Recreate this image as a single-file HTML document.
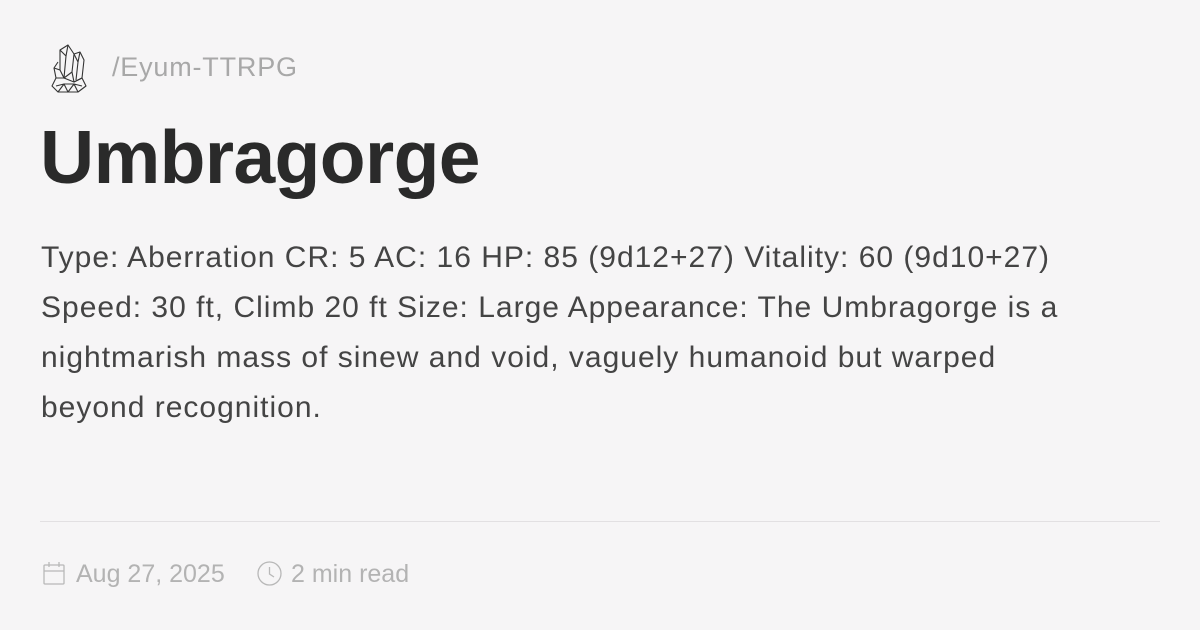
<!DOCTYPE html>
<html><head><meta charset="utf-8"><style>
html,body{margin:0;padding:0}
body{width:1200px;height:630px;background:#f6f5f6;font-family:"Liberation Sans",sans-serif;position:relative;overflow:hidden}
.brand{position:absolute;left:112px;top:52px;font-size:27px;color:#a8a8a8;letter-spacing:0.8px}
h1{position:absolute;left:40px;top:120px;margin:0;font-size:75px;font-weight:bold;color:#2a2a2a;letter-spacing:-0.6px;line-height:1}
.desc{position:absolute;left:41px;top:233px;font-size:30px;line-height:50px;color:#444;white-space:nowrap;letter-spacing:1px}
.hr{position:absolute;left:40px;right:40px;top:521px;height:1px;background:#e2e0e2}
.meta{position:absolute;top:560px;font-size:25px;color:#b3b3b3}
</style></head><body>
<svg style="position:absolute;left:48px;top:42px" width="40" height="52" viewBox="0 0 40 52" fill="none" stroke="#333" stroke-width="1.1" stroke-linejoin="round">
<path d="M12 8 L20 3 L26 12 L24 30 L16 36 L12 28 Z"/>
<path d="M20 3 L18 14 L12 8 M18 14 L16 36"/>
<path d="M26 12 L32 10 L36 18 L34 36 L26 40 L24 30"/>
<path d="M32 10 L30 20 L26 12 M30 20 L28 38"/>
<path d="M10 20 L6 26 L8 36 L16 36"/>
<path d="M6 26 L12 28"/>
<path d="M4 44 L8 36 L16 36 L26 40 L34 36 L38 44 L30 50 L20 50 L10 50 Z"/>
<path d="M10 50 L16 42 L20 50 L26 42 L30 50 M16 42 L26 42 M8 44 L16 42 M26 42 L34 44"/>
</svg>
<div class="brand">/Eyum-TTRPG</div>
<h1>Umbragorge</h1>
<div class="desc">Type: Aberration CR: 5 AC: 16 HP: 85 (9d12+27) Vitality: 60 (9d10+27)<br>Speed: 30 ft, Climb 20 ft Size: Large Appearance: The Umbragorge is a<br>nightmarish mass of sinew and void, vaguely humanoid but warped<br>beyond recognition.</div>
<div class="hr"></div>
<svg style="position:absolute;left:43px;top:561px" width="22" height="24" viewBox="0 0 22 24" fill="none" stroke="#b8b8b8" stroke-width="1.3"><rect x="1" y="4" width="20" height="19" rx="1"/><path d="M1 10 H21 M6 1 V6 M16 1 V6"/></svg>
<div class="meta" style="left:76px">Aug 27, 2025</div>
<svg style="position:absolute;left:257px;top:561px" width="25" height="25" viewBox="0 0 25 25" fill="none" stroke="#b8b8b8" stroke-width="1.3"><circle cx="12.5" cy="12.5" r="11.5"/><path d="M12.5 6 V13 L17 16"/></svg>
<div class="meta" style="left:291px">2 min read</div>
</body></html>
